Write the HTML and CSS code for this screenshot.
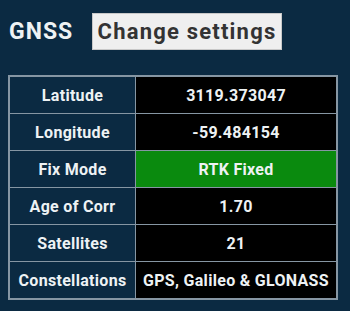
FILE: index.html
```html
<!DOCTYPE html>
<html>
<head>
<title>GNSS</title>
<link rel="stylesheet" href="styles.css">
</head>
<body>

<div class="header">
  <span class="title">GNSS</span>
  <button class="settings-btn">Change settings</button>
</div>

<table class="gnss-table">
  <tr>
    <td class="label">Latitude</td>
    <td class="value">3119.373047</td>
  </tr>
  <tr>
    <td class="label">Longitude</td>
    <td class="value">-59.484154</td>
  </tr>
  <tr>
    <td class="label">Fix Mode</td>
    <td class="value fix-ok">RTK Fixed</td>
  </tr>
  <tr>
    <td class="label">Age of Corr</td>
    <td class="value">1.70</td>
  </tr>
  <tr>
    <td class="label">Satellites</td>
    <td class="value">21</td>
  </tr>
  <tr>
    <td class="label">Constellations</td>
    <td class="value">GPS, Galileo &amp; GLONASS</td>
  </tr>
</table>

</body>
</html>
```

FILE: styles.css
```css
body {
  margin: 8px;
  background-color: #0b2a42;
  font-family: Roboto, "Liberation Sans", sans-serif;
  color: #eef2f4;
}

.header {
  display: flex;
  align-items: center;
  height: 37px;
  margin-top: 5px;
}

.title {
  font-size: 23px;
  font-weight: bold;
  letter-spacing: 1px;
  margin-left: 1px;
  width: 83px;
}

.settings-btn {
  height: 37px;
  width: 190px;
  padding: 0;
  font-family: Roboto, "Liberation Sans", sans-serif;
  font-size: 22px;
  font-weight: bold;
  letter-spacing: 1.2px;
  color: #333;
  background-color: #efefef;
  border: 1px solid #c8c8c8;
}

.gnss-table {
  margin-top: 25px;
  width: 330px;
  border-collapse: collapse;
  border: 2px solid #8696a3;
}

.gnss-table td {
  height: 36px;
  padding: 0;
  border: 1px solid #8696a3;
  text-align: center;
  font-size: 16px;
  font-weight: bold;
  letter-spacing: 0.3px;
}

.label {
  width: 125px;
}

.value {
  background-color: #000;
}

.fix-ok {
  background-color: #0a8a0e;
}
```
